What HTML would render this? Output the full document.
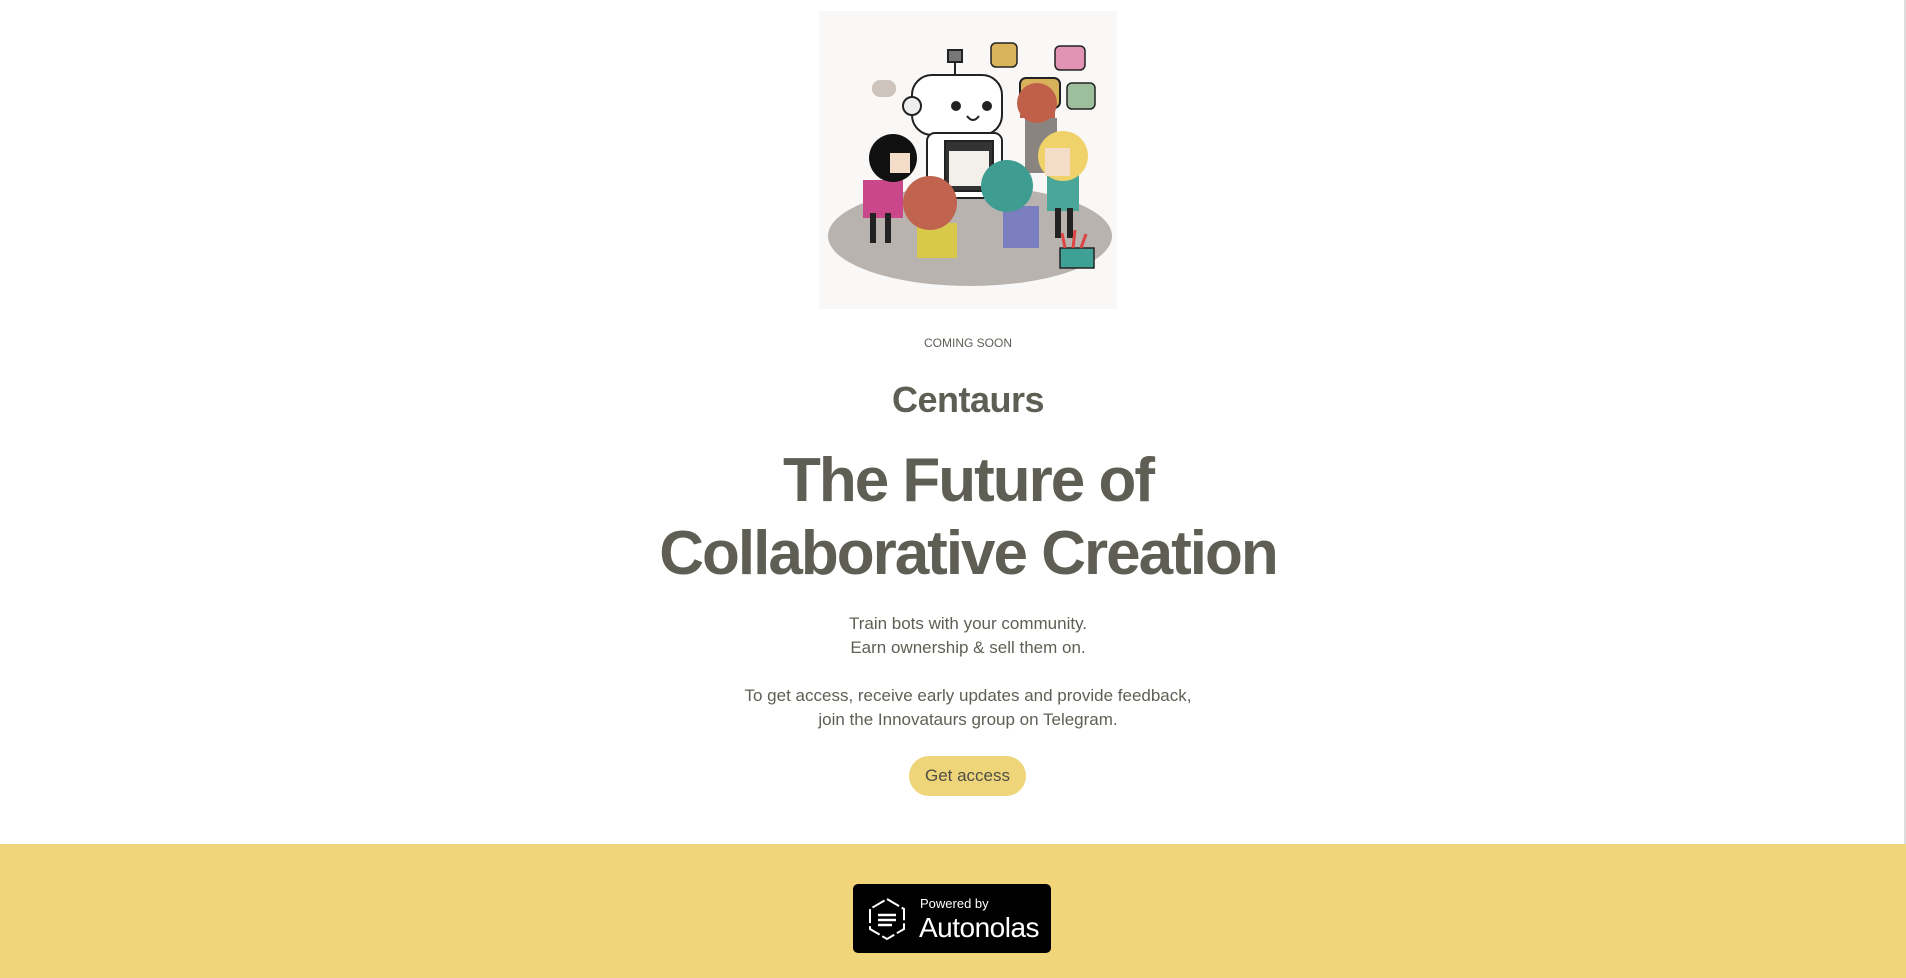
<!DOCTYPE html>
<html><head><meta charset="utf-8"><style>
html,body{margin:0;padding:0;width:1906px;height:978px;overflow:hidden;background:#fff;font-family:"Liberation Sans",sans-serif;color:#5f5e55}
.c{position:absolute;left:0;width:1936px;text-align:center}
.edge{position:absolute;right:0;top:0;width:2px;height:844px;background:#ddd}
</style></head><body>
<div class="edge"></div>
<svg style="position:absolute;left:815px;top:8px" width="305" height="305" viewBox="0 0 305 305">
<rect x="4" y="3" width="298" height="298" fill="#faf8f7"/>
<ellipse cx="155" cy="228" rx="142" ry="50" fill="#b8b3ae"/>
<g stroke="#222" stroke-width="2">
<rect x="133" y="42" width="14" height="12" fill="#777"/>
<line x1="140" y1="54" x2="140" y2="68"/>
<rect x="97" y="67" width="90" height="60" rx="20" fill="#fff"/>
<circle cx="97" cy="98" r="9" fill="#eee"/>
<rect x="112" y="125" width="75" height="65" rx="8" fill="#fff"/>
<rect x="130" y="133" width="48" height="50" fill="#333"/>
<rect x="134" y="143" width="40" height="35" fill="#f3f0ec" stroke="none"/>
<rect x="205" y="70" width="40" height="30" rx="6" fill="#d8b25a"/>
</g>
<rect x="176" y="35" width="26" height="24" rx="5" fill="#d9b45a" stroke="#222" stroke-width="1.5"/>
<rect x="240" y="38" width="30" height="24" rx="5" fill="#e194b6" stroke="#222" stroke-width="1.5"/>
<rect x="252" y="75" width="28" height="26" rx="5" fill="#9dbf9b" stroke="#222" stroke-width="1.5"/>
<rect x="57" y="72" width="24" height="17" rx="8" fill="#cdc5bd"/>
<circle cx="141" cy="98" r="5" fill="#222"/><circle cx="172" cy="98" r="5" fill="#222"/>
<path d="M152 108 q6 8 12 0" stroke="#222" stroke-width="2" fill="none"/>
<rect x="210" y="110" width="32" height="55" fill="#8a8480"/>
<circle cx="222" cy="95" r="20" fill="#c0604a"/>
<rect x="205" y="90" width="35" height="20" fill="#c0604a"/>
<rect x="48" y="172" width="40" height="38" fill="#c9478a"/>
<rect x="55" y="205" width="6" height="30" fill="#222"/><rect x="70" y="205" width="6" height="30" fill="#222"/>
<circle cx="78" cy="150" r="24" fill="#111"/>
<rect x="75" y="145" width="20" height="20" fill="#f3dcc8"/>
<rect x="232" y="165" width="32" height="38" fill="#4aa699"/>
<rect x="240" y="200" width="6" height="30" fill="#222"/><rect x="252" y="200" width="6" height="30" fill="#222"/>
<circle cx="248" cy="148" r="25" fill="#efd36a"/>
<rect x="230" y="140" width="25" height="28" fill="#f3dcc8"/>
<rect x="102" y="215" width="40" height="35" fill="#d9c94a"/>
<circle cx="115" cy="195" r="27" fill="#c0634f"/>
<rect x="188" y="198" width="36" height="42" fill="#7b7fc0"/>
<circle cx="192" cy="178" r="26" fill="#3f9c90"/>
<rect x="245" y="240" width="34" height="20" fill="#3fa096" stroke="#222" stroke-width="1.5"/>
<path d="M250 240 l-3 -15 M258 240 l2 -18 M266 240 l5 -14" stroke="#d44" stroke-width="3"/>
</svg>
<div class="c" style="top:335px;font-size:12px;line-height:16px">COMING SOON</div>
<div class="c" style="top:377px;font-size:36px;line-height:46px;font-weight:bold;letter-spacing:-0.5px">Centaurs</div>
<div class="c" style="top:444px;font-size:62px;line-height:73px;font-weight:bold;letter-spacing:-2px">The Future of<br>Collaborative Creation</div>
<div class="c" style="top:612px;font-size:17px;line-height:24px">Train bots with your community.<br>Earn ownership &amp; sell them on.</div>
<div class="c" style="top:684px;font-size:17px;line-height:24px">To get access, receive early updates and provide feedback,<br>join the Innovataurs group on Telegram.</div>
<div style="position:absolute;left:909px;top:756px;width:117px;height:40px;border-radius:20px;background:#efd57a;font-size:17px;line-height:40px;text-align:center;color:#4f4e46">Get access</div>
<div style="position:absolute;left:0;top:844px;width:1906px;height:134px;background:#f0d57a"></div>
<div style="position:absolute;left:853px;top:884px;width:198px;height:69px;border-radius:5px;background:#000;color:#fff">
<svg style="position:absolute;left:12px;top:12px" width="44" height="46" viewBox="0 0 44 46"><path d="M22 3 L39 13 L39 33 L22 43 L5 33 L5 13 Z" fill="none" stroke="#fff" stroke-width="2" stroke-dasharray="14 3"/><path d="M13 19h18M13 24h18M13 29h14" stroke="#fff" stroke-width="2.5"/></svg>
<div style="position:absolute;left:67px;top:12px;font-size:13px;line-height:15px">Powered by</div>
<div style="position:absolute;left:66px;top:28px;font-size:28px;line-height:32px;letter-spacing:-0.5px">Autonolas</div>
</div>
</body></html>
